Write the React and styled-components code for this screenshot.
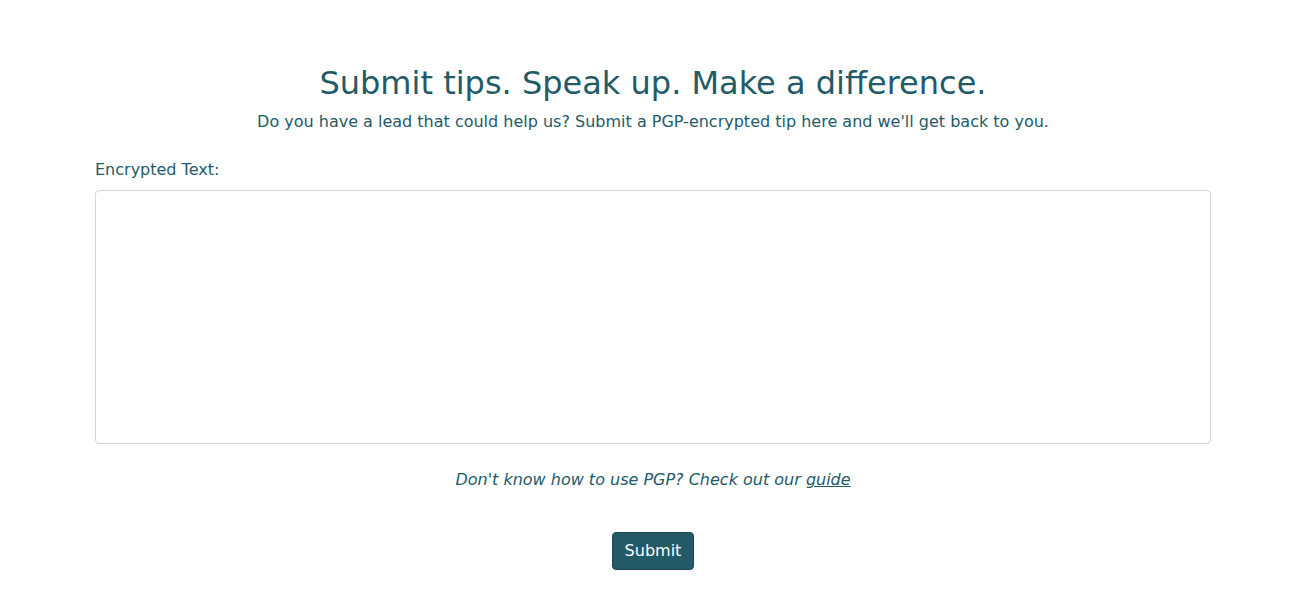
import React, { useState } from "react";
import styled, { createGlobalStyle } from "styled-components";

const Global = createGlobalStyle`
  * { box-sizing: border-box; }
  body {
    margin: 0;
    background: #fff;
    font-family: "DejaVu Sans", Verdana, sans-serif;
    font-size: 16px;
    line-height: 1.5;
    color: #235a68;
  }
`;

const App = () => {
  const [text, setText] = useState("");

  return (
    <Page>
      <Global />
      <Container>
        <Title>Submit tips. Speak up. Make a difference.</Title>
        <Lead>
          Do you have a lead that could help us? Submit a PGP-encrypted tip here and we'll get back to you.
        </Lead>
        <Form onSubmit={(e) => e.preventDefault()}>
          <Label htmlFor="tip">Encrypted Text:</Label>
          <TextArea id="tip" value={text} onChange={(e) => setText(e.target.value)} />
          <Hint>
            Don't know how to use PGP? Check out our <a href="#guide">guide</a>
          </Hint>
          <Actions>
            <Button type="submit">Submit</Button>
          </Actions>
        </Form>
      </Container>
    </Page>
  );
};

export default App;

const Page = styled.div`
  width: 1306px;
  padding-top: 64px;
`;

const Container = styled.div`
  max-width: 1116px;
  margin: 0 auto;
`;

const Title = styled.h1`
  margin: 0 0 8px;
  font-size: 32px;
  font-weight: 400;
  line-height: 1.2;
  text-align: center;
  color: #235a68;
`;

const Lead = styled.p`
  margin: 0 0 24px;
  font-size: 16px;
  text-align: center;
`;

const Form = styled.form`
  display: flex;
  flex-direction: column;
`;

const Label = styled.label`
  display: block;
  margin-bottom: 8px;
`;

const TextArea = styled.textarea`
  display: block;
  width: 100%;
  height: 254px;
  padding: 6px 12px;
  border: 1px solid #d3d6da;
  border-radius: 4px;
  resize: none;
  font: inherit;
  color: #212529;
  outline: none;
`;

const Hint = styled.p`
  margin: 24px 0 0;
  font-style: italic;
  text-align: center;

  a {
    color: #235a68;
    text-decoration: underline;
  }
`;

const Actions = styled.div`
  display: flex;
  justify-content: center;
  margin-top: 40px;
`;

const Button = styled.button`
  padding: 6px 12px;
  border: 1px solid #1b4852;
  border-radius: 4px;
  background: #235a68;
  color: #fff;
  font: inherit;
  line-height: 24px;
  cursor: pointer;
`;
